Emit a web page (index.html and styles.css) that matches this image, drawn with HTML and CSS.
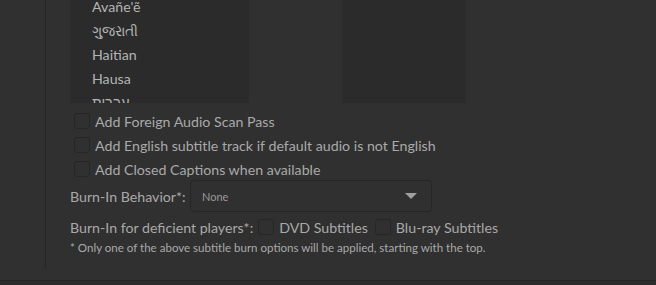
FILE: index.html
```html
<!DOCTYPE html>
<html>
<head>
<meta charset="utf-8">
<link rel="stylesheet" href="styles.css">
</head>
<body>
<div class="page">
  <div class="panel">
    <div class="lists">
      <div class="listbox">
        <div class="item first">Avañe'ẽ</div>
        <div class="item">ગુજરાતી</div>
        <div class="item">Haitian</div>
        <div class="item">Hausa</div>
        <div class="item">עברית</div>
      </div>
      <div class="listbox right"></div>
    </div>
    <label class="check"><span class="box"></span>Add Foreign Audio Scan Pass</label>
    <label class="check"><span class="box"></span>Add English subtitle track if default audio is not English</label>
    <label class="check"><span class="box"></span>Add Closed Captions when available</label>
    <div class="row behavior">
      <span class="label">Burn-In Behavior*:</span>
      <div class="select"><span>None</span><span class="arrow"></span></div>
    </div>
    <div class="row deficient">
      <span class="label">Burn-In for deficient players*:</span>
      <label class="check inline"><span class="box"></span>DVD Subtitles</label>
      <label class="check inline"><span class="box"></span>Blu-ray Subtitles</label>
    </div>
    <div class="note">* Only one of the above subtitle burn options will be applied, starting with the top.</div>
  </div>
  <div class="bottom"></div>
</div>
</body>
</html>
```
FILE: styles.css
```css
html, body {
  margin: 0;
  padding: 0;
  background: #303030;
  width: 656px;
  height: 285px;
  overflow: hidden;
  font-family: "Lato", "Noto Sans", sans-serif;
  color: #a9a9a9;
}
.page {
  height: 285px;
  display: flex;
  flex-direction: column;
}
.panel {
  margin-left: 45px;
  border-left: 1px solid #262626;
  height: 268px;
  padding-left: 24px;
  box-sizing: border-box;
}
.bottom {
  margin-top: 12px;
  border-top: 1px solid #262626;
  background: #2c2c2c;
  flex: 1;
}
.lists {
  display: flex;
  gap: 93px;
  height: 103px;
}
.listbox {
  width: 179px;
  background: #2b2b2b;
  overflow: hidden;
}
.listbox.right {
  width: 124px;
}
.item {
  padding-left: 22px;
  height: 24px;
  line-height: 24px;
  font-size: 14.2px;
  color: #b4b4b4;
}
.item.first {
  margin-top: -5px;
}
.check {
  display: flex;
  align-items: center;
  height: 24px;
  font-size: 14.2px;
  padding-left: 4px;
}
.lists + .check {
  margin-top: 6px;
}
.box {
  width: 14px;
  height: 14px;
  border: 1px solid #262626;
  border-radius: 3px;
  margin-right: 5px;
  flex: none;
}
.row {
  display: flex;
  align-items: center;
  font-size: 14.2px;
}
.behavior {
  margin-top: -1px;
  height: 32px;
}
.behavior .label {
  width: 120px;
}
.select {
  width: 242px;
  height: 32px;
  border: 1px solid #262626;
  border-radius: 4px;
  display: flex;
  align-items: center;
  justify-content: space-between;
  padding: 0 14px 0 11px;
  box-sizing: border-box;
  font-size: 11px;
  color: #999;
}
.arrow {
  width: 0;
  height: 0;
  border-left: 6px solid transparent;
  border-right: 6px solid transparent;
  border-top: 6px solid #a0a0a0;
}
.deficient {
  height: 28px;
  margin-top: 1px;
}
.deficient .label {
  margin-right: 5px;
}
.check.inline {
  padding-left: 0;
  margin-right: 7px;
}
.note {
  font-size: 11.55px;
  margin-top: 0;
}
```
